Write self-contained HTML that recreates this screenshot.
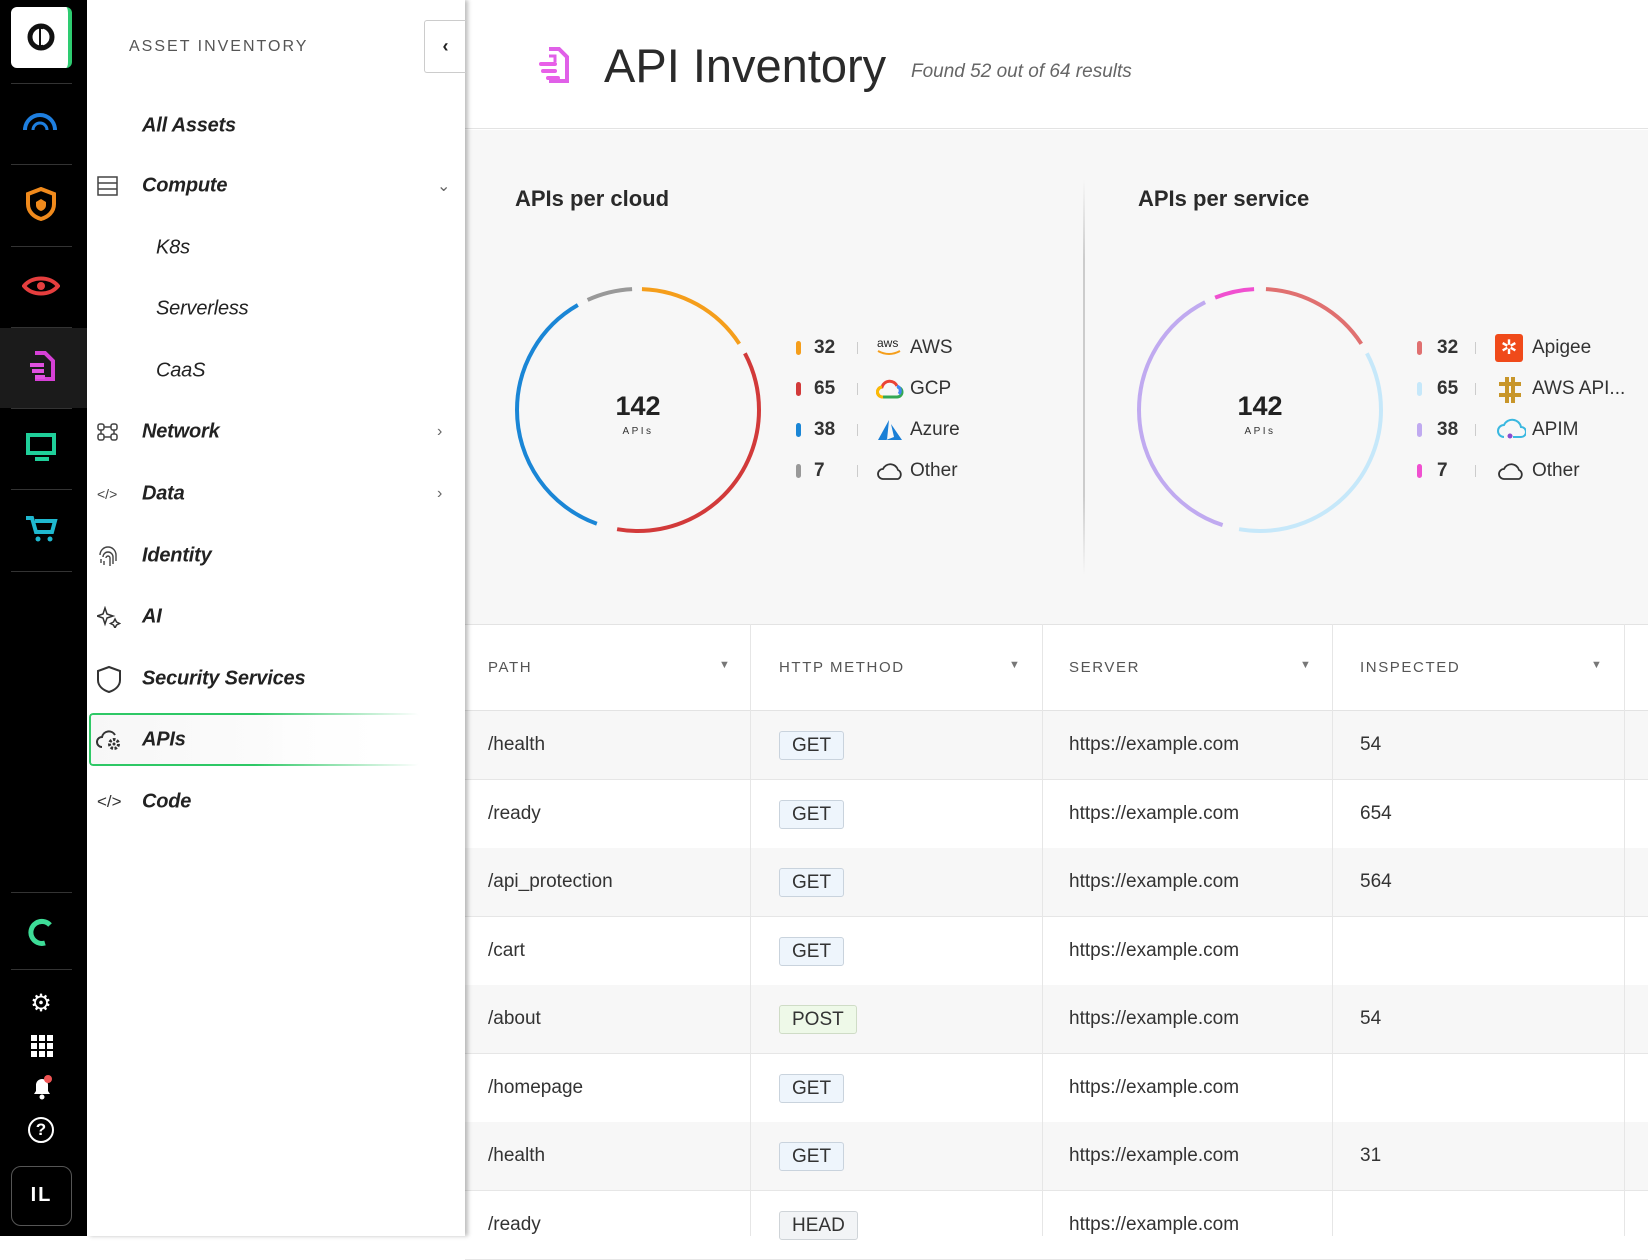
<!DOCTYPE html>
<html><head><meta charset="utf-8"><style>
*{box-sizing:border-box;margin:0;padding:0}
body{width:1648px;height:1236px;overflow:hidden;font-family:"Liberation Sans",sans-serif;background:#fff;position:relative;color:#333}
.abs{position:absolute}
.rail{left:0;top:0;width:87px;height:1236px;background:#000}
.sep{position:absolute;left:11px;width:61px;height:1px;background:#333}
.panel{left:87px;top:0;width:378px;height:1236px;background:#fff;box-shadow:3px 0 4px rgba(0,0,0,.25);z-index:5}
.mi{position:absolute;left:55px;font-size:20px;font-style:italic;font-weight:bold;color:#222;transform:translateY(-50%);letter-spacing:-.2px;white-space:nowrap}
.sub{left:69px;font-weight:normal}
.ic{position:absolute;left:10px;transform:translateY(-50%)}
.chev{position:absolute;left:350px;transform:translateY(-50%);color:#666;font-size:16px}
.main{left:465px;top:0;width:1183px;height:1236px}
.th{position:absolute;top:624px;height:87px;border-bottom:1px solid #e3e3e3;font-size:15px;letter-spacing:1.6px;color:#555;line-height:87px;white-space:nowrap}
.row{position:absolute;left:465px;width:1183px;height:69px;border-bottom:1px solid #e6e6e6}
.cell{position:absolute;font-size:19px;color:#333;line-height:68px;white-space:nowrap}
.badge{position:absolute;left:779px;height:29px;padding:0 12px;border:1px solid #c9d3dd;background:#eef5fc;border-radius:3px;font-size:19px;line-height:27px;color:#333}
.vl{position:absolute;width:1px;background:#e6e6e6;top:624px;height:612px}
.lg{position:absolute;font-size:19px;color:#333;transform:translateY(-50%);white-space:nowrap}
.bar{position:absolute;width:5px;height:14px;border-radius:3px;transform:translateY(-50%)}
.tick{position:absolute;width:1px;height:12px;background:#ccc;transform:translateY(-50%)}
</style></head><body>
<div class="abs rail">
 <div class="abs" style="left:11px;top:7px;width:61px;height:61px;background:#fff;border-radius:6px;border-right:4px solid #2ecc71"></div>
 <svg class="abs" style="left:27px;top:23px" width="28" height="28" viewBox="0 0 28 28"><circle cx="14" cy="14" r="11" fill="none" stroke="#111" stroke-width="5"/><path d="M14 3v22" stroke="#111" stroke-width="4"/><path d="M14 6a8 8 0 0 1 0 16z" fill="#fff"/></svg>
 <div class="sep" style="top:83px"></div><div class="sep" style="top:164px"></div><div class="sep" style="top:246px"></div><div class="sep" style="top:327px"></div><div class="sep" style="top:408px"></div><div class="sep" style="top:489px"></div><div class="sep" style="top:571px"></div>
 <div class="abs" style="left:0;top:328px;width:87px;height:80px;background:#1b1b1b"></div>
 <svg class="abs" style="left:22px;top:108px" width="36" height="26"><path d="M3 22a15 15 0 0 1 30 0" fill="none" stroke="#1e7fe0" stroke-width="4"/><path d="M11 22a7 7 0 0 1 14 0" fill="none" stroke="#1e7fe0" stroke-width="3"/></svg>
 <svg class="abs" style="left:25px;top:187px" width="32" height="34"><path d="M16 2l13 5v10c0 8-6 13-13 15C9 30 3 25 3 17V7z" fill="none" stroke="#f08a1c" stroke-width="4"/><path d="M16 12l5 3v3c0 3-2 5-5 6-3-1-5-3-5-6v-3z" fill="#f08a1c"/></svg>
 <svg class="abs" style="left:22px;top:274px" width="38" height="24"><path d="M2 12c8-10 26-10 34 0-8 10-26 10-34 0z" fill="none" stroke="#e53e3e" stroke-width="4"/><circle cx="19" cy="12" r="4" fill="#e53e3e"/></svg>
 <svg class="abs" style="left:27px;top:350px" width="30" height="32"><path d="M8 3h10l8 8v18H8" fill="none" stroke="#d640d6" stroke-width="4"/><path d="M3 15h14M5 21h12M8 27h10" stroke="#e050e0" stroke-width="4"/></svg>
 <svg class="abs" style="left:25px;top:432px" width="32" height="30"><rect x="3" y="3" width="26" height="18" fill="none" stroke="#1fcf9a" stroke-width="4"/><path d="M10 27h14" stroke="#1fcf9a" stroke-width="4"/></svg>
 <svg class="abs" style="left:24px;top:514px" width="34" height="30"><path d="M2 4h6l4 14h16l3-11H11" fill="none" stroke="#1fb8cf" stroke-width="4"/><circle cx="14" cy="25" r="2.5" fill="#1fb8cf"/><circle cx="26" cy="25" r="2.5" fill="#1fb8cf"/></svg>
 <div class="sep" style="top:892px"></div><div class="sep" style="top:969px"></div>
 <svg class="abs" style="left:28px;top:918px" width="28" height="28"><path d="M17 25A11 11 0 1 1 22 7" fill="none" stroke="#3ddc97" stroke-width="5"/></svg>
 <div class="abs" style="left:28px;top:991px;width:26px;text-align:center;color:#fff;font-size:24px;line-height:26px">⚙</div>
 <svg class="abs" style="left:31px;top:1035px" width="22" height="22"><g fill="#fff"><rect x="0" y="0" width="6" height="6"/><rect x="8" y="0" width="6" height="6"/><rect x="16" y="0" width="6" height="6"/><rect x="0" y="8" width="6" height="6"/><rect x="8" y="8" width="6" height="6"/><rect x="16" y="8" width="6" height="6"/><rect x="0" y="16" width="6" height="6"/><rect x="8" y="16" width="6" height="6"/><rect x="16" y="16" width="6" height="6"/></g></svg>
 <svg class="abs" style="left:30px;top:1074px" width="26" height="26"><path d="M4 20h16l-2-3v-6a6 6 0 0 0-12 0v6z" fill="#fff"/><circle cx="12" cy="23" r="2.5" fill="#fff"/><circle cx="18" cy="5" r="4" fill="#f05555"/></svg>
 <div class="abs" style="left:28px;top:1117px;width:26px;height:26px;border:2px solid #fff;border-radius:50%;color:#fff;text-align:center;font-weight:bold;font-size:17px;line-height:22px">?</div>
 <div class="abs" style="left:11px;top:1166px;width:61px;height:60px;border:1.5px solid #555;border-radius:10px;color:#fff;font-weight:bold;font-size:20px;text-align:center;line-height:57px;letter-spacing:2px">IL</div>
</div>

<div class="abs panel">
 <div class="abs" style="left:42px;top:38px;font-size:16px;letter-spacing:2px;color:#555">ASSET INVENTORY</div>
 <div class="abs" style="left:337px;top:20px;width:42px;height:53px;border:1px solid #ccc;border-right:none;border-radius:3px 0 0 3px;text-align:center;line-height:50px;font-weight:bold;font-size:18px;color:#222">‹</div>
 <div class="mi" style="top:126px">All Assets</div>
 <div class="mi" style="top:186px">Compute</div><svg class="ic" style="top:186px" width="22" height="20"><rect x="1" y="1" width="19" height="18" fill="none" stroke="#444" stroke-width="1.5"/><path d="M1 7h19M1 13h19" stroke="#444" stroke-width="1.5"/></svg><div class="chev" style="top:186px">⌄</div>
 <div class="mi sub" style="top:248px">K8s</div>
 <div class="mi sub" style="top:309px">Serverless</div>
 <div class="mi sub" style="top:371px">CaaS</div>
 <div class="mi" style="top:432px">Network</div><svg class="ic" style="top:432px" width="22" height="18"><g fill="none" stroke="#444" stroke-width="1.5"><rect x="1" y="1" width="6" height="6" rx="2"/><rect x="14" y="1" width="6" height="6" rx="2"/><rect x="1" y="11" width="6" height="6" rx="2"/><rect x="14" y="11" width="6" height="6" rx="2"/><path d="M7 4h7M7 14h7M4 7v4M17 7v4"/></g></svg><div class="chev" style="top:432px">›</div>
 <div class="mi" style="top:494px">Data</div><div class="ic" style="top:494px;font-size:14px;color:#444">&lt;/&gt;</div><div class="chev" style="top:494px">›</div>
 <div class="mi" style="top:556px">Identity</div><svg class="ic" style="top:556px" width="22" height="22"><g fill="none" stroke="#444" stroke-width="1.4"><path d="M3 10a8 8 0 0 1 16 0v6"/><path d="M6 12a5 5 0 0 1 10 0v7"/><path d="M9 13a2 2 0 0 1 4 0v8"/><path d="M4 14v4M7 16v4"/></g></svg>
 <div class="mi" style="top:617px">AI</div><svg class="ic" style="top:617px" width="24" height="22"><g fill="none" stroke="#333" stroke-width="1.5"><path d="M8 2l2 6 6 2-6 2-2 6-2-6-6-2 6-2z"/><path d="M18 13l1.5 3 3 1.5-3 1.5-1.5 3-1.5-3-3-1.5 3-1.5z"/></g></svg>
 <div class="mi" style="top:679px">Security Services</div><svg class="ic" style="top:679px;left:8px" width="28" height="28"><path d="M14 2l11 4v9c0 6-5 10-11 12C8 25 3 21 3 15V6z" fill="none" stroke="#333" stroke-width="2"/></svg>
 <div class="abs" style="left:2px;top:713px;width:330px;height:53px;border:2px solid #2ec866;border-right:none;border-radius:4px;background:linear-gradient(90deg,#f7f7f7,#fff);-webkit-mask:linear-gradient(90deg,#000 50%,transparent)"></div>
 <div class="mi" style="top:740px">APIs</div><svg class="ic" style="top:740px;left:8px" width="28" height="24"><path d="M7 19a5 5 0 0 1 0-10 7 7 0 0 1 13-2" fill="none" stroke="#333" stroke-width="2"/><circle cx="19" cy="16" r="4.5" fill="none" stroke="#333" stroke-width="3" stroke-dasharray="2.5 1.5"/><circle cx="19" cy="16" r="1.5" fill="#333"/></svg>
 <div class="mi" style="top:802px">Code</div><div class="ic" style="top:802px;font-size:17px;color:#333">&lt;/&gt;</div>
</div>

<div class="abs main">
 <div class="abs" style="left:0;top:0;width:1183px;height:129px;border-bottom:1px solid #e3e3e3;background:#fff"></div>
 <svg class="abs" style="left:72px;top:46px" width="36" height="40"><path d="M12 3h10l8 8v24H12" fill="none" stroke="#e060e8" stroke-width="4"/><path d="M4 18h14M6 25h12M11 32h10" stroke="#e860e8" stroke-width="4" stroke-linecap="round"/><path d="M12 10h6v6" fill="none" stroke="#e060e8" stroke-width="3"/></svg>
 <div class="abs" style="left:139px;top:38px;font-size:47px;color:#2a2a2a;line-height:56px">API Inventory</div>
 <div class="abs" style="left:446px;top:61px;font-size:19px;font-style:italic;color:#666">Found 52 out of 64 results</div>
 <div class="abs" style="left:0;top:130px;width:1183px;height:494px;background:#f7f7f7"></div>
 <div class="abs" style="left:50px;top:186px;font-size:22px;font-weight:bold;color:#2a2a2a">APIs per cloud</div>
 <div class="abs" style="left:673px;top:186px;font-size:22px;font-weight:bold;color:#2a2a2a">APIs per service</div>
 <div class="abs" style="left:618px;top:180px;width:2px;height:395px;background:linear-gradient(#f7f7f7,#ccc 20%,#ccc 80%,#f7f7f7)"></div>
</div>

<svg class="abs" style="left:0;top:0;z-index:1" width="1648" height="700">
 <g transform="rotate(-90 638 410)" fill="none" stroke-width="4">
  <circle cx="638" cy="410" r="121" stroke="#f59e1b" stroke-dasharray="116 700" stroke-dashoffset="-4"/>
  <circle cx="638" cy="410" r="121" stroke="#d23a3a" stroke-dasharray="270 700" stroke-dashoffset="-131"/>
  <circle cx="638" cy="410" r="121" stroke="#1a86d6" stroke-dasharray="275 700" stroke-dashoffset="-422"/>
  <circle cx="638" cy="410" r="121" stroke="#999" stroke-dasharray="46 800" stroke-dashoffset="-708"/>
 </g>
 <g transform="rotate(-90 1260 410)" fill="none" stroke-width="4">
  <circle cx="1260" cy="410" r="121" stroke="#e07070" stroke-dasharray="114 700" stroke-dashoffset="-6"/>
  <circle cx="1260" cy="410" r="121" stroke="#c6e8fa" stroke-dasharray="270 700" stroke-dashoffset="-131"/>
  <circle cx="1260" cy="410" r="121" stroke="#c0aaf0" stroke-dasharray="285 700" stroke-dashoffset="-418"/>
  <circle cx="1260" cy="410" r="121" stroke="#f050d0" stroke-dasharray="40 800" stroke-dashoffset="-714"/>
 </g>
 <text x="638" y="415" text-anchor="middle" font-family="Liberation Sans" font-size="27" font-weight="bold" fill="#222">142</text>
 <text x="638" y="434" text-anchor="middle" font-family="Liberation Sans" font-size="10" letter-spacing="2.5" fill="#333">APIs</text>
 <text x="1260" y="415" text-anchor="middle" font-family="Liberation Sans" font-size="27" font-weight="bold" fill="#222">142</text>
 <text x="1260" y="434" text-anchor="middle" font-family="Liberation Sans" font-size="10" letter-spacing="2.5" fill="#333">APIs</text>
</svg>

<div style="position:absolute;left:0;top:0;z-index:2">
 <div class="bar" style="left:796px;top:348px;background:#f59e1b"></div><div class="lg" style="left:814px;top:348px;font-weight:bold">32</div><div class="tick" style="left:857px;top:348px"></div>
 <div class="bar" style="left:796px;top:389px;background:#d23a3a"></div><div class="lg" style="left:814px;top:389px;font-weight:bold">65</div><div class="tick" style="left:857px;top:389px"></div>
 <div class="bar" style="left:796px;top:430px;background:#1a86d6"></div><div class="lg" style="left:814px;top:430px;font-weight:bold">38</div><div class="tick" style="left:857px;top:430px"></div>
 <div class="bar" style="left:796px;top:471px;background:#999"></div><div class="lg" style="left:814px;top:471px;font-weight:bold">7</div><div class="tick" style="left:857px;top:471px"></div>
 <svg class="abs" style="left:876px;top:336px" width="28" height="22"><text x="1" y="11" font-family="Liberation Sans" font-size="12" fill="#222">aws</text><path d="M2 15q11 6 22 0" fill="none" stroke="#f59e1b" stroke-width="2"/></svg><div class="lg" style="left:910px;top:348px">AWS</div>
 <svg class="abs" style="left:876px;top:377px" width="28" height="24"><path d="M7 20a5 5 0 0 1-1-10 8 8 0 0 1 15-1" fill="none" stroke="#ea4335" stroke-width="3"/><path d="M7 20h14a5 5 0 0 0 0-10" fill="none" stroke="#34a853" stroke-width="3"/><path d="M6 10a5 5 0 0 0 1 10" fill="none" stroke="#fbbc05" stroke-width="3"/><path d="M21 9a5 5 0 0 1 2 8" fill="none" stroke="#4285f4" stroke-width="3"/></svg><div class="lg" style="left:910px;top:389px">GCP</div>
 <svg class="abs" style="left:876px;top:418px" width="28" height="24"><path d="M13 2L2 22h9zM15 6l11 16H10l8-3z" fill="#1a7fd6"/></svg><div class="lg" style="left:910px;top:430px">Azure</div>
 <svg class="abs" style="left:876px;top:460px" width="28" height="22"><path d="M7 19a5 5 0 0 1 0-10 8 8 0 0 1 15 1 5 5 0 0 1 0 9z" fill="none" stroke="#333" stroke-width="1.8"/></svg><div class="lg" style="left:910px;top:471px">Other</div>

 <div class="bar" style="left:1417px;top:348px;background:#e07070"></div><div class="lg" style="left:1437px;top:348px;font-weight:bold">32</div><div class="tick" style="left:1475px;top:348px"></div>
 <div class="bar" style="left:1417px;top:389px;background:#c6e8fa"></div><div class="lg" style="left:1437px;top:389px;font-weight:bold">65</div><div class="tick" style="left:1475px;top:389px"></div>
 <div class="bar" style="left:1417px;top:430px;background:#c0aaf0"></div><div class="lg" style="left:1437px;top:430px;font-weight:bold">38</div><div class="tick" style="left:1475px;top:430px"></div>
 <div class="bar" style="left:1417px;top:471px;background:#f050d0"></div><div class="lg" style="left:1437px;top:471px;font-weight:bold">7</div><div class="tick" style="left:1475px;top:471px"></div>
 <div class="abs" style="left:1495px;top:334px;width:28px;height:28px;background:#f04a1a;border-radius:3px;color:#fff;text-align:center;font-size:20px;line-height:28px">✲</div><div class="lg" style="left:1532px;top:348px">Apigee</div>
 <svg class="abs" style="left:1497px;top:376px" width="26" height="28"><g fill="#c8962a"><rect x="8" y="1" width="4" height="26"/><rect x="14" y="1" width="4" height="26"/><rect x="2" y="6" width="22" height="4"/><rect x="2" y="17" width="22" height="4"/></g></svg><div class="lg" style="left:1532px;top:389px">AWS API...</div>
 <svg class="abs" style="left:1496px;top:417px" width="30" height="26"><path d="M8 20a6 6 0 0 1 0-12 9 9 0 0 1 17 2 5 5 0 0 1 0 10h-8" fill="none" stroke="#3ab8e0" stroke-width="2"/><circle cx="14" cy="19" r="2.5" fill="#8a4ad0"/></svg><div class="lg" style="left:1532px;top:430px">APIM</div>
 <svg class="abs" style="left:1497px;top:460px" width="28" height="22"><path d="M7 19a5 5 0 0 1 0-10 8 8 0 0 1 15 1 5 5 0 0 1 0 9z" fill="none" stroke="#333" stroke-width="1.8"/></svg><div class="lg" style="left:1532px;top:471px">Other</div>
</div>

<div class="abs" style="left:465px;top:624px;width:1183px;height:1px;background:#e3e3e3"></div>
<div class="row" style="top:711px;background:#f7f7f7"></div>
<div class="row" style="top:780px"></div>
<div class="row" style="top:848px;background:#f7f7f7"></div>
<div class="row" style="top:917px"></div>
<div class="row" style="top:985px;background:#f7f7f7"></div>
<div class="row" style="top:1054px"></div>
<div class="row" style="top:1122px;background:#f7f7f7"></div>
<div class="row" style="top:1191px"></div>
<div class="th" style="left:465px;width:1183px"></div>
<div class="th" style="left:488px;border:none">PATH</div>
<div class="th" style="left:779px;border:none">HTTP METHOD</div>
<div class="th" style="left:1069px;border:none">SERVER</div>
<div class="th" style="left:1360px;border:none">INSPECTED</div>
<div class="abs" style="left:719px;top:659px;font-size:11px;color:#777">▼</div>
<div class="abs" style="left:1009px;top:659px;font-size:11px;color:#777">▼</div>
<div class="abs" style="left:1300px;top:659px;font-size:11px;color:#777">▼</div>
<div class="abs" style="left:1591px;top:659px;font-size:11px;color:#777">▼</div>
<div class="vl" style="left:750px"></div><div class="vl" style="left:1042px"></div><div class="vl" style="left:1332px"></div><div class="vl" style="left:1624px"></div>

<div class="cell" style="left:488px;top:711px">/health</div>
<div class="cell" style="left:488px;top:780px">/ready</div>
<div class="cell" style="left:488px;top:848px">/api_protection</div>
<div class="cell" style="left:488px;top:917px">/cart</div>
<div class="cell" style="left:488px;top:985px">/about</div>
<div class="cell" style="left:488px;top:1054px">/homepage</div>
<div class="cell" style="left:488px;top:1122px">/health</div>
<div class="cell" style="left:488px;top:1191px">/ready</div>

<div class="badge" style="top:731px">GET</div>
<div class="badge" style="top:800px">GET</div>
<div class="badge" style="top:868px">GET</div>
<div class="badge" style="top:937px">GET</div>
<div class="badge" style="top:1005px;background:#eef9e8;border-color:#cfdcc6">POST</div>
<div class="badge" style="top:1074px">GET</div>
<div class="badge" style="top:1142px">GET</div>
<div class="badge" style="top:1211px;background:#f2f4f6;border-color:#cfd4d8">HEAD</div>

<div class="cell" style="left:1069px;top:711px">https://example.com</div>
<div class="cell" style="left:1069px;top:780px">https://example.com</div>
<div class="cell" style="left:1069px;top:848px">https://example.com</div>
<div class="cell" style="left:1069px;top:917px">https://example.com</div>
<div class="cell" style="left:1069px;top:985px">https://example.com</div>
<div class="cell" style="left:1069px;top:1054px">https://example.com</div>
<div class="cell" style="left:1069px;top:1122px">https://example.com</div>
<div class="cell" style="left:1069px;top:1191px">https://example.com</div>

<div class="cell" style="left:1360px;top:711px">54</div>
<div class="cell" style="left:1360px;top:780px">654</div>
<div class="cell" style="left:1360px;top:848px">564</div>
<div class="cell" style="left:1360px;top:985px">54</div>
<div class="cell" style="left:1360px;top:1122px">31</div>
</body></html>
